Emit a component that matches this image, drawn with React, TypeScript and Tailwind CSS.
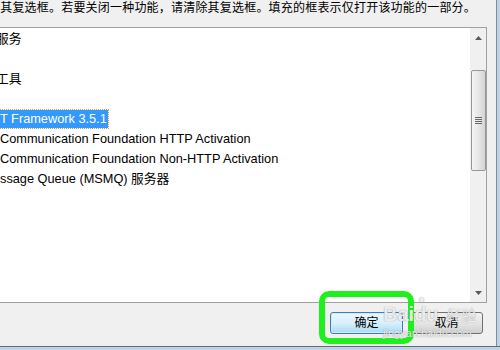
import React from 'react';

const cjk = '"Liberation Sans", "Noto Sans CJK SC", sans-serif';

type Row = { text: string; indent: number; selected?: boolean };

const rows: Row[] = [
  { text: '服务', indent: -4 },
  { text: '', indent: 0 },
  { text: '工具', indent: -4 },
  { text: '', indent: 0 },
  { text: 'T Framework 3.5.1', indent: 1, selected: true },
  { text: 'Communication Foundation HTTP Activation', indent: 0 },
  { text: 'Communication Foundation Non-HTTP Activation', indent: 0 },
  { text: 'ssage Queue (MSMQ) 服务器', indent: 0 },
  { text: '', indent: 0 },
  { text: '', indent: 0 },
  { text: '：', indent: -6 },
];

function ScrollBar() {
  return (
    <div className="w-[16px] h-full bg-[#f0f0f0] flex flex-col items-center">
      {/* up arrow */}
      <div className="h-[17px] w-full flex items-center justify-center pt-[3px]">
        <svg width="7" height="4" viewBox="0 0 7 4">
          <path d="M0 4 L3.5 0 L7 4 Z" fill="#5a5a5a" />
        </svg>
      </div>
      <div className="h-[25px]" />
      {/* thumb */}
      <div className="w-[15px] h-[101px] rounded-[2px] border border-[#979797] bg-gradient-to-r from-[#f5f5f5] via-[#e6e6e6] to-[#d4d4d4] flex items-center justify-center">
        <div className="flex flex-col gap-[1px]">
          <div className="w-[7px] h-[1px] bg-[#6a6a6a]" />
          <div className="w-[7px] h-[1px] bg-[#6a6a6a]" />
          <div className="w-[7px] h-[1px] bg-[#6a6a6a]" />
          <div className="w-[7px] h-[1px] bg-[#6a6a6a]" />
        </div>
      </div>
      <div className="flex-1" />
      {/* down arrow */}
      <div className="h-[17px] w-full flex items-center justify-center pb-[2px]">
        <svg width="7" height="4" viewBox="0 0 7 4">
          <path d="M0 0 L7 0 L3.5 4 Z" fill="#5a5a5a" />
        </svg>
      </div>
    </div>
  );
}

export default function App() {
  return (
    <div
      className="relative w-[500px] h-[350px] overflow-hidden bg-[#f0f0f0] flex flex-col text-black"
      style={{ fontFamily: cjk }}
    >
      <div className="flex flex-1">
        <div className="w-[496px] flex flex-col">
          {/* description */}
          <div className="h-[27px] overflow-hidden whitespace-nowrap text-[12px] leading-[16px] tracking-[0.2px] -ml-[12px]">
            择其复选框。若要关闭一种功能，请清除其复选框。填充的框表示仅打开该功能的一部分。
          </div>

          {/* feature list */}
          <div className="w-[487px] h-[276px] bg-white border-t border-r border-b border-[#a0a0a0] flex">
            <div className="flex-1 overflow-hidden pt-[1px]">
              {rows.map((r, i) => (
                <div key={i} className="h-[20px] flex items-center whitespace-nowrap text-[12.75px]">
                  {r.selected ? (
                    <span className="bg-[#3399ff] text-white px-[1px] h-[18px] flex items-center outline outline-1 outline-dotted outline-[#c0a060] -ml-[1px]">
                      {r.text}
                    </span>
                  ) : (
                    <span style={{ marginLeft: r.indent }}>{r.text}</span>
                  )}
                </div>
              ))}
            </div>
            <ScrollBar />
          </div>

          {/* buttons */}
          <div className="flex-1 flex justify-end items-start pt-[9px] pr-[13px] gap-[7px]">
            <button className="w-[73px] h-[22px] rounded-[3px] border border-[#3c7fb1] bg-gradient-to-b from-[#eaf6fd] via-[#d9f0fc] to-[#a7d9f5] text-[12px] flex items-center justify-center shadow-[inset_0_0_0_1px_#cfeafa]">
              确定
            </button>
            <button className="w-[73px] h-[22px] rounded-[3px] border border-[#707070] bg-gradient-to-b from-[#f2f2f2] via-[#e5e5e5] to-[#cfcfcf] text-[12px] flex items-center justify-center">
              取消
            </button>
          </div>
        </div>
        {/* window frame right */}
        <div className="flex-1 border-l border-[#8a8a8a] bg-[#bcd3ec]" />
      </div>
      <div className="h-[1px] bg-[#6a6a6a]" />
      <div className="h-[3px] bg-[#bcd3ec]" />

      {/* green highlight */}
      <div className="absolute left-[319px] top-[291px] w-[95px] h-[53px] border-[6px] border-[#1ef01e] rounded-[10px]" />

      {/* watermark */}
      <div
        className="absolute left-[383px] top-[300px] text-white/85 pointer-events-none [text-shadow:0_0_1px_rgba(90,90,90,0.8)]"
        style={{ fontFamily: '"Liberation Sans", "Noto Sans CJK SC", sans-serif' }}
      >
        <div className="flex items-end h-[24px] leading-none">
          <span className="text-[20px] font-bold">Bai</span>
          <span className="text-[20px] font-bold relative">
            du
            <span className="absolute -top-[10px] left-[4px] text-[11px]">●</span>
          </span>
          <span className="text-[15px] ml-[8px] mb-[1px]">经验</span>
        </div>
        <div className="text-[11px] leading-none mt-[4px]">jingyan.baidu.com</div>
      </div>
    </div>
  );
}
